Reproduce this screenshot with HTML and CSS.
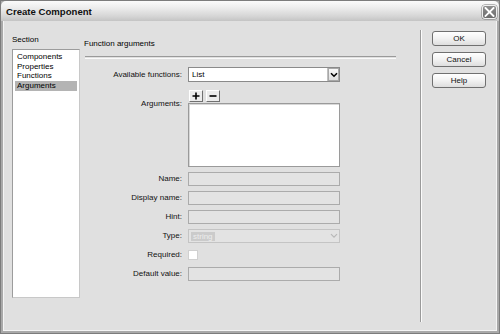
FILE: index.html
```html
<!DOCTYPE html>
<html>
<head>
<meta charset="utf-8">
<link rel="stylesheet" href="styles.css">
</head>
<body>
<div class="window">
  <div class="titlebar">
    <span class="title">Create Component</span>
    <span class="close"><svg width="11" height="10" viewBox="0 0 11 10"><path d="M1.5 1 L9.5 9 M9.5 1 L1.5 9" stroke="#fff" stroke-width="1.8" stroke-linecap="square"/></svg></span>
  </div>
  <div class="client">
    <div class="sidebar">
      <div class="section-label">Section</div>
      <ul class="listbox">
        <li>Components</li>
        <li>Properties</li>
        <li>Functions</li>
        <li class="selected">Arguments</li>
      </ul>
    </div>
    <div class="main">
      <div class="heading">Function arguments</div>
      <div class="rule"></div>
      <div class="form">
        <label class="lbl">Available functions:</label>
        <div class="select"><span class="value">List</span><span class="arrow"><svg width="8" height="6" viewBox="0 0 8 6"><path d="M1 1.2 L4 4.2 L7 1.2" fill="none" stroke="#000" stroke-width="1.6"/></svg></span></div>
        <label class="lbl args-label">Arguments:</label>
        <div class="args">
          <div class="tool-row">
            <span class="tool"><svg width="8" height="8" viewBox="0 0 8 8"><path d="M4 0.5 V7.5 M0.5 4 H7.5" stroke="#000" stroke-width="1.6"/></svg></span>
            <span class="tool"><svg width="8" height="8" viewBox="0 0 8 8"><path d="M0.5 4 H7.5" stroke="#000" stroke-width="1.6"/></svg></span>
          </div>
          <div class="textarea"></div>
        </div>
        <label class="lbl">Name:</label>
        <div class="field"></div>
        <label class="lbl">Display name:</label>
        <div class="field"></div>
        <label class="lbl">Hint:</label>
        <div class="field"></div>
        <label class="lbl">Type:</label>
        <div class="field disabled-select"><span class="dvalue">string</span><span class="darrow"><svg width="8" height="6" viewBox="0 0 8 6"><path d="M1 1.2 L4 4.2 L7 1.2" fill="none" stroke="#b8b8b8" stroke-width="1.2"/></svg></span></div>
        <label class="lbl">Required:</label>
        <div class="check-cell"><span class="checkbox"></span></div>
        <label class="lbl">Default value:</label>
        <div class="field"></div>
      </div>
    </div>
    <div class="separator"></div>
    <div class="buttons">
      <div class="btn">OK</div>
      <div class="btn">Cancel</div>
      <div class="btn">Help</div>
    </div>
  </div>
</div>
</body>
</html>
```

FILE: styles.css
```css
html, body {
  margin: 0;
  padding: 0;
  background: #8c8c8c;
}
.window {
  width: 500px;
  height: 334px;
  box-sizing: border-box;
  border: 1px solid #7c7c7c;
  background: #a9a9a9;
  display: flex;
  flex-direction: column;
  font-family: "Liberation Sans", Arial, sans-serif;
  font-size: 8px;
  color: #000;
}
.titlebar {
  height: 20px;
  box-sizing: border-box;
  display: flex;
  justify-content: space-between;
  align-items: flex-start;
  padding: 4px 2px 0 5px;
  background: linear-gradient(#fbfbfb 0%, #ececec 35%, #d6d6d6 75%, #c4c4c4 100%);
  border-radius: 5px 5px 0 0;
}
.title {
  font-weight: bold;
  font-size: 9.6px;
  line-height: 14px;
  color: #111;
}
.close {
  width: 15px;
  height: 14px;
  box-sizing: border-box;
  border: 1px solid #f0f0f0;
  border-radius: 3px;
  background: linear-gradient(#8e8e8e, #6c6c6c);
  display: flex;
  align-items: center;
  justify-content: center;
  box-shadow: 0 0 0 0.5px #777;
}
.client {
  flex: 1;
  margin: 0 2px 2px 2px;
  border: 1px solid #f4f4f4;
  border-top: none;
  background: #e0e0e0;
  display: flex;
  align-items: flex-start;
}
.sidebar {
  margin-left: 8px;
  margin-top: 14px;
  width: 68px;
}
.section-label {
  line-height: 10px;
  margin-bottom: 4px;
}
.listbox {
  list-style: none;
  margin: 0;
  padding: 2px 2px 0 2px;
  height: 249px;
  box-sizing: border-box;
  background: #fff;
  border: 1px solid #9c9c9c;
  border-right-color: #c8c8c8;
  border-bottom-color: #c8c8c8;
}
.listbox li {
  line-height: 9.7px;
  height: 9.7px;
  padding-left: 2px;
  white-space: nowrap;
}
.listbox li.selected {
  background: #b4b4b4;
}
.main {
  margin-left: 4px;
  margin-top: 18px;
  width: 312px;
}
.heading {
  line-height: 10px;
}
.rule {
  margin-top: 7px;
  height: 1px;
  border-top: 1px solid #9a9a9a;
  border-bottom: 1px solid #fafafa;
  margin-left: 1px;
}
.form {
  margin-top: 8px;
  display: grid;
  grid-template-columns: 98px 152px;
  column-gap: 6px;
  row-gap: 5px;
}
.lbl {
  text-align: right;
  align-self: center;
  line-height: 10px;
  white-space: nowrap;
  color: #111;
}
.args-label {
  align-self: start;
  padding-top: 12px;
}
.select {
  height: 15px;
  box-sizing: border-box;
  background: #fff;
  border: 1px solid #8a8a8a;
  display: flex;
  align-items: center;
  justify-content: space-between;
}
.select .value {
  padding-left: 3px;
  line-height: 10px;
}
.arrow {
  width: 12px;
  height: 13px;
  box-sizing: border-box;
  border-left: 1px solid #c0c0c0;
  background: linear-gradient(#fafafa, #dcdcdc);
  display: flex;
  align-items: center;
  justify-content: center;
  box-shadow: inset 0 0 0 1px #a8a8a8;
}
.args {
  margin-top: 3px;
  display: flex;
  flex-direction: column;
  gap: 1px;
}
.tool-row {
  display: flex;
  gap: 3px;
  margin-left: 1px;
}
.tool {
  width: 14px;
  height: 12px;
  box-sizing: border-box;
  background: #ececec;
  border: 1px solid #fff;
  border-right-color: #707070;
  border-bottom-color: #707070;
  display: flex;
  align-items: center;
  justify-content: center;
}
.textarea {
  height: 64px;
  box-sizing: border-box;
  background: #fff;
  border: 1px solid #9a9a9a;
  box-shadow: inset 1px 1px 0 #d8d8d8;
}
.field {
  height: 14px;
  box-sizing: border-box;
  background: #e3e3e3;
  border: 1px solid #ababab;
}
.disabled-select {
  display: flex;
  align-items: center;
  justify-content: space-between;
  border-color: #c4c4c4;
}
.dvalue {
  margin-left: 2px;
  background: #cbcbcb;
  color: #ededed;
  line-height: 9px;
  padding: 0 2px;
}
.darrow {
  width: 11px;
  height: 12px;
  display: flex;
  align-items: center;
  justify-content: center;
}
.check-cell {
  height: 14px;
  display: flex;
  align-items: center;
}
.checkbox {
  width: 10px;
  height: 10px;
  box-sizing: border-box;
  background: #fff;
  border: 1px solid #d0d0d0;
}
.separator {
  margin-left: 24px;
  margin-top: 9px;
  width: 1px;
  height: 292px;
  border-left: 1px solid #9a9a9a;
  background: #fbfbfb;
}
.buttons {
  margin-left: 10px;
  margin-top: 10px;
  width: 54px;
  display: flex;
  flex-direction: column;
  gap: 6px;
}
.btn {
  height: 15px;
  box-sizing: border-box;
  border: 1px solid #707070;
  border-radius: 3px;
  background: linear-gradient(#ffffff, #f2f2f2 50%, #dedede);
  text-align: center;
  line-height: 13px;
  color: #111;
}
```
